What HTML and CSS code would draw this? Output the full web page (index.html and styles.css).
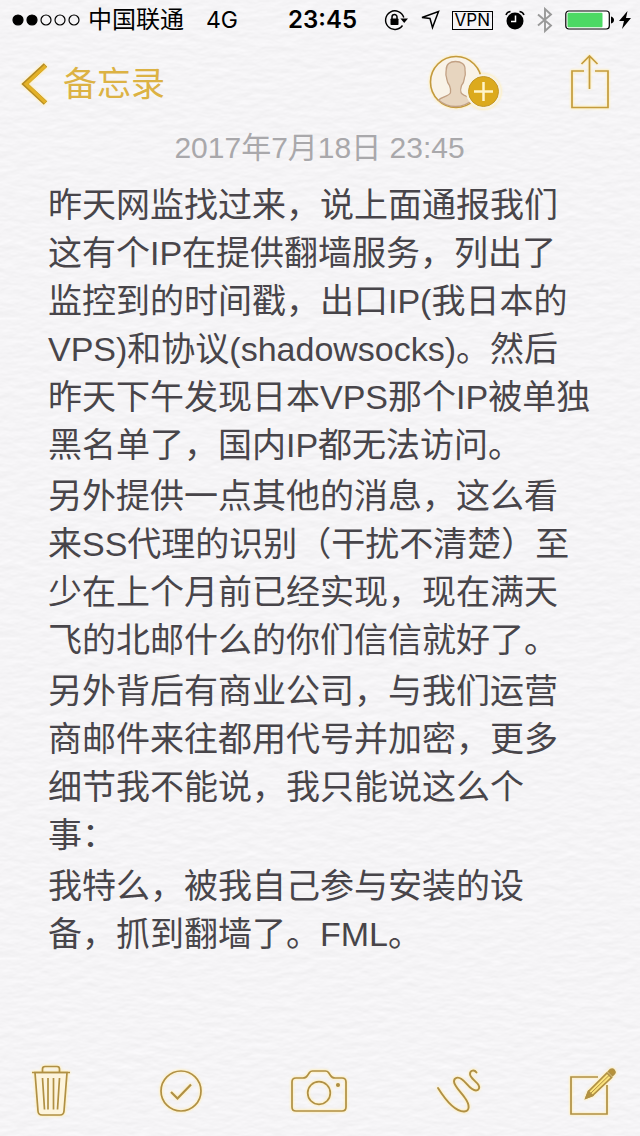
FILE: index.html
```html
<!DOCTYPE html>
<html lang="zh-CN">
<head>
<meta charset="utf-8">
<meta name="viewport" content="width=device-width, initial-scale=1">
<title>备忘录</title>
<link rel="stylesheet" href="styles.css">
</head>
<body>
<div class="screen">
  <header class="status">
    <div class="status-left">
      <svg class="signal" width="70" height="14" viewBox="0 0 70 14" aria-hidden="true">
        <g stroke="#000" stroke-width="1.2"><circle cx="6" cy="7" r="5"/><circle cx="20" cy="7" r="5"/></g>
        <g fill="none" stroke="#000" stroke-width="1.2"><circle cx="34" cy="7" r="5"/><circle cx="48" cy="7" r="5"/><circle cx="62" cy="7" r="5"/></g>
      </svg>
      <span class="carrier">中国联通</span>
      <span class="network">4G</span>
    </div>
    <time class="clock">23:45</time>
    <div class="status-right">
      <svg width="24" height="22" viewBox="0 0 24 22" aria-hidden="true">
        <path d="M18.500 16.500A9.300 9.300 0 1 1 19.800 8.500" fill="none" stroke="#000" stroke-width="1.400"/>
        <path d="M16.400 9.500H24L20.200 14z"/>
        <rect x="6.500" y="9.500" width="8" height="6.500" rx=".8"/>
        <path d="M8 10V8a2.500 2.500 0 0 1 5 0v2" fill="none" stroke="#000" stroke-width="1.500"/>
      </svg>
      <svg width="20" height="20" viewBox="0 0 20 20" aria-hidden="true">
        <path d="M2 7.500L18.500 1.500 12.500 17.500 10 8.500z" fill="none" stroke="#000" stroke-width="1.500"/>
      </svg>
      <span class="vpn">VPN</span>
      <svg width="20" height="20" viewBox="0 0 20 20" aria-hidden="true">
        <circle cx="10" cy="11" r="8.500"/>
        <path d="M1 5Q2 2 5.500 1.500M19 5Q18 2 14.500 1.500" fill="none" stroke="#000" stroke-width="1.500"/>
        <path d="M10.500 5.500V11.500H6" fill="none" stroke="#fff" stroke-width="1.500"/>
      </svg>
      <svg width="16" height="26" viewBox="0 0 16 26" aria-hidden="true">
        <path d="M1 7.500L14 18.500 8 24V2L14 7.500 1 18.500" fill="none" stroke="#999" stroke-width="1.900"/>
      </svg>
      <svg class="battery" width="50" height="20" viewBox="0 0 50 20" aria-hidden="true">
        <rect x=".8" y="1" width="43.500" height="18" rx="3" fill="#fff" stroke="#000" stroke-width="1.200"/>
        <rect x="2.500" y="2.700" width="35" height="14.600" rx="1" fill="#4cd964"/>
        <path d="M46 6.500Q49 7.500 49 10T46 13.500z"/>
      </svg>
      <svg class="bolt" width="12" height="18" viewBox="0 0 12 18" aria-hidden="true">
        <path d="M8.500 0L0 10H5L3 18 12 7H7z"/>
      </svg>
    </div>
  </header>

  <nav class="nav">
    <button class="back" type="button">
      <svg class="glow" width="27" height="44" viewBox="0 0 27 44" aria-hidden="true">
        <path d="M24.500 3L4 22 24.500 41" fill="none" stroke="#b48a22" stroke-width="5"/>
        <path d="M24.500 4L5 22 24.500 40.500" fill="none" stroke="#e3b127" stroke-width="3.200"/>
      </svg>
      <span>备忘录</span>
    </button>
    <div class="nav-actions">
      <button class="icon" type="button" aria-label="添加他人">
        <svg class="glow" width="72" height="56" viewBox="0 0 72 56" aria-hidden="true">
          <circle cx="27" cy="28" r="25.500" fill="#f9f3e8" stroke="#c39a3d" stroke-width="1.600"/>
          <path d="M9.500 46C13 42.500 21 42 21.500 38.500Q22 35 20.500 31.500C18 29 18 26 17.500 23.500 16.300 21 17 19 17.200 16 17 10 21 7.500 26.500 7.500S36.500 10 36 16C36.200 19 37 21 35.500 23.500 35 27 35 29 32.500 31.500Q31 36 32 38.500C33 42 40 42 43.500 46A25.500 25.500 0 0 1 9.500 46z" fill="#e7d5bf" stroke="#c2a184" stroke-width="1.300"/>
          <circle cx="54.500" cy="37.500" r="17.500" fill="#f8f3e4"/>
          <circle cx="54.500" cy="37.500" r="15" fill="#dcaa1d" stroke="#c3982b"/>
          <path d="M45 37.500H64M54.500 28V47" stroke="#fff5c8" stroke-width="2.500"/>
        </svg>
      </button>
      <button class="icon" type="button" aria-label="分享">
        <svg class="glow" width="40" height="56" viewBox="0 0 40 56" aria-hidden="true">
          <path d="M14 17H2V53.500H38V17H25M19.500 35V2M11.500 10L19.500 2 27.500 10" fill="none" stroke="#c49c3e" stroke-width="1.700"/>
        </svg>
      </button>
    </div>
  </nav>

  <main class="note">
    <time class="date">2017年7月18日 23:45</time>
    <article class="body">
      <p>昨天网监找过来，说上面通报我们这有个IP在提供翻墙服务，列出了<br>监控到的时间戳，出口IP(我日本的VPS)和协议(shadowsocks)。然后昨天下午发现日本VPS那个IP被单独黑名单了，国内IP都无法访问。</p>
      <p>另外提供一点其他的消息，这么看来SS代理的识别（干扰不清楚）至少在上个月前已经实现，现在满天飞的北邮什么的你们信信就好了。</p>
      <p>另外背后有商业公司，与我们运营商邮件来往都用代号并加密，更多细节我不能说，我只能说这么个事：</p>
      <p>我特么，被我自己参与安装的设备，抓到翻墙了。FML。</p>
    </article>
  </main>

  <footer class="toolbar">
    <button class="icon" type="button" aria-label="删除">
      <svg class="glow" width="38" height="52" viewBox="0 0 38 52" fill="none" stroke="#b09045" stroke-width="1.700" aria-hidden="true">
        <path d="M3 7.500L6 46Q6.300 50 10 50H28Q31.700 50 32 46L35 7.500z" fill="#fdf4dc"/>
        <path d="M0 7.500H38M10.500 7V4Q10.500 1.500 13 1.500H25Q27.500 1.500 27.500 4V7M10.500 13L12.500 44.500M16 13V44.500M21.500 13V44.500M27.500 13L25.500 44.500"/>
      </svg>
    </button>
    <button class="icon" type="button" aria-label="核对清单">
      <svg class="glow" width="42" height="42" viewBox="0 0 42 42" fill="none" stroke="#b09045" stroke-width="1.700" aria-hidden="true">
        <circle cx="21" cy="21" r="20"/>
        <path d="M11 22L17.500 28.500 31 14.500" stroke-width="2.200"/>
      </svg>
    </button>
    <button class="icon" type="button" aria-label="相机">
      <svg class="glow" width="56" height="42" viewBox="0 0 56 42" fill="none" stroke="#b09045" stroke-width="1.700" aria-hidden="true">
        <path d="M5 8H12Q15 8 16.500 5.500L18.500 2.500Q19.500 1 21.500 1H34.500Q36.500 1 37.500 2.500L39.500 5.500Q41 8 44 8H51Q55 8 55 12V37Q55 41 51 41H5Q1 41 1 37V12Q1 8 5 8z"/>
        <circle cx="28" cy="23" r="11.300"/>
        <circle cx="47" cy="15" r="1.200" fill="#8f7a45"/>
      </svg>
    </button>
    <button class="icon" type="button" aria-label="绘图">
      <svg class="glow" width="44" height="44" viewBox="0 0 44 44" fill="none" stroke="#b09045" stroke-width="1.900" stroke-linecap="round" aria-hidden="true">
        <path d="M1 19C6 27 16 42.500 27 42.500 33 42 33 36 28 29 24 23 17 17 17 12.500 17 8.500 21 7.500 24.500 10 30 13.500 33 21.500 39 21.500 42 21.500 43 18.500 41.500 16 39 12 33 9 33 5 33 1 37.500 .5 39.500 3.500"/>
      </svg>
    </button>
    <button class="icon" type="button" aria-label="新建备忘录">
      <svg class="glow" width="46" height="48" viewBox="0 0 46 48" fill="none" stroke="#b09045" stroke-width="1.700" aria-hidden="true">
        <path d="M28 10H1V47H37V18"/>
        <path d="M16 31L18.500 24.500 37 6 41.500 10.500 22.500 28.500z" fill="#fbe27a"/>
        <path d="M16 31L18.500 24.500 22.500 28.500z" fill="#b8923a"/>
        <path d="M20.500 26.500L39.500 8" stroke-width="1"/>
        <path d="M38.500 4.500L40.500 2.500Q42.500 1.500 44 3T44.500 6.500L42.500 8.500z" fill="#b8923a"/>
      </svg>
    </button>
  </footer>
</div>
</body>
</html>
```
FILE: styles.css
```css
* {
  box-sizing: border-box;
}

body {
  margin: 0;
  color: #000;
  font-family: Inter, "Noto Sans CJK SC", sans-serif;
  background-color: #f5f4f6;
  /* Embossed paper grain */
  background-image: url("data:image/svg+xml,%3Csvg xmlns='http://www.w3.org/2000/svg' width='320' height='320'%3E%3Cfilter id='p' x='0' y='0' width='100%25' height='100%25' color-interpolation-filters='sRGB'%3E%3CfeTurbulence type='fractalNoise' baseFrequency='.06 .14' numOctaves='3' stitchTiles='stitch'/%3E%3CfeColorMatrix values='0 0 0 0 1 0 0 0 0 1 0 0 0 0 1 1 0 0 0 0'/%3E%3CfeDiffuseLighting surfaceScale='.12' diffuseConstant='1.150' lighting-color='%23f6f5f7'%3E%3CfeDistantLight azimuth='270' elevation='60'/%3E%3C/feDiffuseLighting%3E%3C/filter%3E%3Crect width='320' height='320' filter='url(%23p)'/%3E%3C/svg%3E");
}

.screen {
  min-height: 100vh;
  display: flex;
  flex-direction: column;
}

svg {
  display: block;
  flex: none;
}

button {
  margin: 0;
  padding: 0;
  border: 0;
  background: none;
  font: inherit;
  cursor: pointer;
}

.glow {
  overflow: visible;
  filter: drop-shadow(0 0 1px #ffeeb5) drop-shadow(0 0 1px #fff0c4);
}

.status {
  display: grid;
  grid-template-columns: 1fr auto 1fr;
  align-items: center;
  height: 40px;
  padding: 0 9px 0 12px;
  font-size: 23px;
  line-height: 40px;
  white-space: nowrap;
}

.status-left,
.status-right {
  display: flex;
  align-items: center;
}

.carrier {
  margin-left: 6px;
  font-size: 24px;
}

.network {
  margin-left: 22px;
}

.clock {
  padding-left: 2px;
  font-weight: 600;
  font-size: 24px;
}

.status-right {
  justify-content: flex-end;
  gap: 12px;
}

.vpn {
  padding: 0 2px;
  border: 1px solid #000;
  font-size: 17px;
  line-height: 17px;
}

.bolt {
  margin-left: -8px;
}

.nav {
  display: flex;
  align-items: center;
  justify-content: space-between;
  height: 86px;
  padding: 0 30px 2px 21px;
}

.back {
  display: flex;
  align-items: center;
  gap: 15px;
  padding-top: 4px;
  color: #dcb244;
  font-size: 34px;
  line-height: 48px;
}

.nav-actions {
  display: flex;
  gap: 69px;
}

.note {
  flex: 1;
  padding: 0 49px 32px 48px;
  font-family: "Liberation Sans", "Noto Sans CJK SC", sans-serif;
}

.date {
  display: block;
  color: #a9a8ab;
  font-size: 30px;
  line-height: 44px;
  text-align: center;
}

.body {
  display: flex;
  flex-direction: column;
  gap: 3px;
  margin-top: 11px;
  color: #48454a;
  font-size: 34px;
  line-height: 48px;
  text-spacing-trim: space-all;
}

.body p {
  margin: 0;
}

.toolbar {
  display: flex;
  align-items: center;
  justify-content: space-between;
  height: 90px;
  padding: 0 24px 0 32px;
}
```
